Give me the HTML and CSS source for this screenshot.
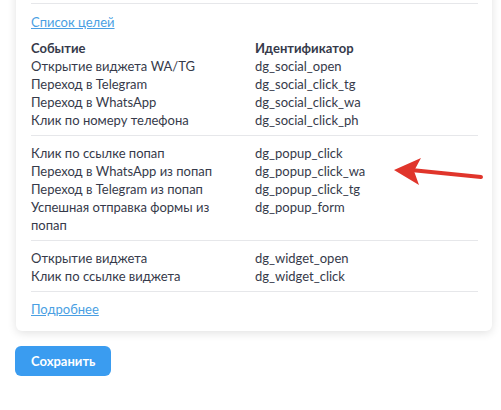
FILE: index.html
```html
<!DOCTYPE html>
<html lang="ru">
<head>
  <meta charset="UTF-8">
  <title>Цели</title>
  <link rel="stylesheet" href="styles.css">
</head>
<body>
  <div class="card">
    <div class="card__prev"></div>

    <div class="goals">
      <a class="link" href="#">Список целей</a>

      <div class="goals__group">
        <div class="goals__head">Событие</div>
        <div class="goals__head">Идентификатор</div>
        <div>Открытие виджета WA/TG</div>
        <div>dg_social_open</div>
        <div>Переход в Telegram</div>
        <div>dg_social_click_tg</div>
        <div>Переход в WhatsApp</div>
        <div>dg_social_click_wa</div>
        <div>Клик по номеру телефона</div>
        <div>dg_social_click_ph</div>
      </div>

      <div class="goals__group">
        <div>Клик по ссылке попап</div>
        <div>dg_popup_click</div>
        <div>Переход в WhatsApp из попап</div>
        <div>dg_popup_click_wa</div>
        <div>Переход в Telegram из попап</div>
        <div>dg_popup_click_tg</div>
        <div>Успешная отправка формы из попап</div>
        <div>dg_popup_form</div>
      </div>

      <div class="goals__group goals__group--last">
        <div>Открытие виджета</div>
        <div>dg_widget_open</div>
        <div>Клик по ссылке виджета</div>
        <div>dg_widget_click</div>
      </div>

      <div class="goals__more">
        <a class="link" href="#">Подробнее</a>
      </div>
    </div>
  </div>

  <button class="btn-save">Сохранить</button>

  <svg class="arrow" width="100" height="34" viewBox="0 0 100 34">
    <path d="M22 13 L92 20" stroke="#e0352b" stroke-width="4" stroke-linecap="round"/>
    <path d="M5 13 L32 1 L25 14 L30 28 Z" fill="#e0352b"/>
  </svg>
</body>
</html>
```

FILE: styles.css
```css
html {
  font-family: "Lato", "Noto Sans", sans-serif;
  font-size: 13px;
  color: #363a4a;
}

body {
  margin: 0;
  padding: 0 9px 0 15px;
  background: #fff;
}

.card {
  margin: -20px 0 0 1px;
  padding: 0 14px 0 15px;
  border-radius: 6px;
  background: #fff;
  box-shadow: 0 2px 10px rgba(0, 0, 0, 0.12);
}

.card__prev {
  height: 23px;
  border-bottom: 1px solid #e6e7ea;
}

.goals {
  padding-top: 9px;
  line-height: 18px;
}

.link {
  color: #4a9fe3;
  text-decoration: underline;
}

.goals__group {
  display: grid;
  grid-template-columns: 216px 1fr;
  column-gap: 8px;
  padding: 8px 0 6px;
  border-bottom: 1px solid #e6e7ea;
}

.goals .link + .goals__group {
  margin-top: 8px;
  padding-top: 0;
}

.goals__head {
  font-weight: 700;
}

.goals__more {
  padding: 8px 0 13px;
}

.btn-save {
  display: block;
  margin-top: 15px;
  height: 30px;
  padding: 0 16px;
  border: 0;
  border-radius: 6px;
  background: #3a9cf0;
  color: #fff;
  font-family: inherit;
  font-size: 13px;
  font-weight: 700;
}

.arrow {
  position: absolute;
  left: 389px;
  top: 157px;
}
```
